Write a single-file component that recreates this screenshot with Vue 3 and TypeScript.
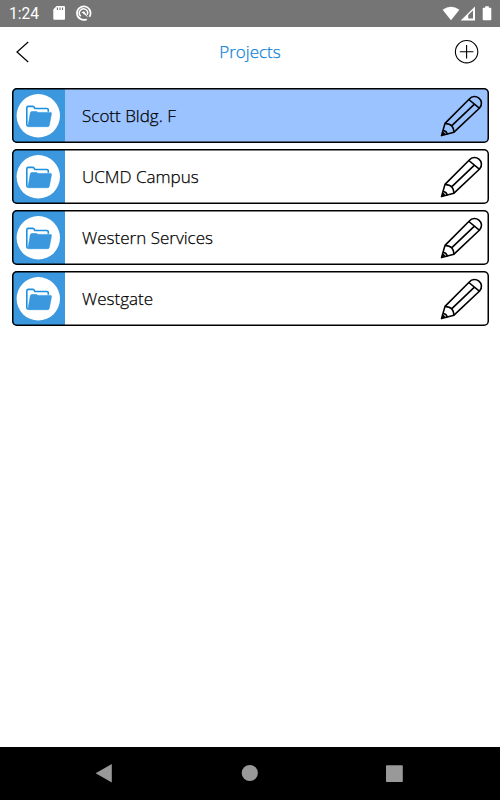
<script setup lang="ts">
import { ref } from 'vue'

const projects: string[] = ['Scott Bldg. F', 'UCMD Campus', 'Western Services', 'Westgate']
const selected = ref(0)
</script>

<template>
  <div class="screen">
    <div class="status">
      <span class="clock">1:24</span>
      <svg class="status-icons" width="44" height="18" viewBox="0 0 44 18">
        <path d="M6.6 2H14q1 0 1 1v11.8q0 1-1 1H4.3q-1 0-1-1V5.6z" fill="#fff" />
        <path d="M7.4 3.4v2.5M10 3.4v2.5M12.5 3.4v2.5" stroke="#757575" stroke-width="1.1" />
        <path d="M36.8 15.2A6.8 6.8 0 1 1 39.4 12.9" fill="none" stroke="#fff" stroke-width="1.7" />
        <path d="M30.8 12.1A4.1 4.1 0 1 1 37.2 10.7" fill="none" stroke="#fff" stroke-width="1.5" />
        <path d="M31.5 8.3l2.6-1 4.2 6.2z" fill="#fff" />
      </svg>
      <svg class="signal-icons" width="52" height="18" viewBox="0 0 52 18">
        <path d="M.6 4.8Q9 -1.4 17.4 4.8L9 15.3z" fill="#fff" />
        <path d="M18.7 15.4L33 1.5v13.9z" fill="#fff" />
        <path d="M26.2 13.5V10l4.8-4.6v8.1z" fill="#757575" />
        <path d="M43.2 1.2h3.6v1.6h1.7q.8 0 .8.8v10.9q0 .8-.8.8h-7q-.8 0-.8-.8V3.6q0-.8.8-.8h1.7z" fill="#fff" />
      </svg>
    </div>

    <header class="toolbar">
      <svg width="16" height="24" viewBox="0 0 16 24">
        <path d="M13.2 2L2 12l11.2 10" fill="none" stroke="#000" stroke-width="1.2" />
      </svg>
      <h1>Projects</h1>
      <svg class="add" width="26" height="26" viewBox="0 0 26 26" fill="none" stroke="#000" stroke-width="1.1">
        <circle cx="12.6" cy="12.7" r="11.2" />
        <path d="M5.8 12.7h13.6M12.6 5.9v13.6" />
      </svg>
    </header>

    <main class="list">
      <div
        v-for="(name, i) in projects"
        :key="name"
        class="row"
        :class="{ active: i === selected }"
        @click="selected = i"
      >
        <div class="tile">
          <svg width="44" height="44" viewBox="0 0 44 44">
            <circle cx="22.3" cy="21.8" r="21.7" fill="#fff" />
            <path
              d="M12.4 32.3q-1.6-.2-1.6-1.8V13.9q0-1.5 1.5-1.5h4.3q1 0 1.5.8l.5.8q.3.5 1 .5h11.2q1.5 0 1.5 1.5v1.8"
              fill="none"
              stroke="#1b8fe0"
              stroke-width="1.6"
            />
            <path
              d="M16.1 17.5h4.4q.6 0 1 .4l.5.5h12.5q1.2 0 1 1.2L33.3 31.2q-.3 1.5-1.7 1.5H12.8q-.8 0-.7-1l2.2-12.8q.3-1.4 1.8-1.4z"
              fill="#3b98de"
              stroke="#1b8fe0"
              stroke-width=".5"
            />
          </svg>
        </div>
        <span class="name">{{ name }}</span>
        <svg class="pencil" width="44" height="44" viewBox="0 0 44 44">
          <g fill="none" stroke="#000" stroke-width="1.6" stroke-linejoin="round">
            <path d="M1.5 41.6L5 29.4 29.3 5C35-1.8 45.8 6.6 39.6 14L14 38.2z" />
            <path d="M5 29.4q4.9.6 6.8 2.5 1.8 2 2.2 6.3M28.8 5.5l10.8 8.8M11.6 31.8l23.1-22" />
            <path d="M3.1 36.3q3.6.8 4.2 4" />
          </g>
          <path d="M1.5 41.6l1.4-4.1q2 .8 2.6 3.1z" fill="#000" />
        </svg>
      </div>
    </main>

    <nav class="navbar">
      <svg width="20" height="20" viewBox="0 0 20 20"><path d="M.6 10.2L16.8 1v18.4z" /></svg>
      <svg width="20" height="20" viewBox="0 0 20 20"><circle cx="9.8" cy="10" r="8.1" /></svg>
      <svg width="20" height="20" viewBox="0 0 20 20"><rect x="2" y="2.2" width="16.8" height="16.8" rx=".8" /></svg>
    </nav>
  </div>
</template>

<style>
body {
  background: #fff;
}
</style>

<style scoped>
.screen {
  display: flex;
  flex-direction: column;
  box-sizing: border-box;
  width: 500px;
  height: 800px;
  overflow: hidden;
  background: #fff;
  font-family: 'Open Sans', sans-serif;
}
.status {
  display: flex;
  align-items: center;
  flex: none;
  box-sizing: border-box;
  height: 26.5px;
  padding: 0 6px 0 9px;
  background: #757575;
  color: #fff;
}
.clock {
  width: 41px;
  padding-top: 2px;
  font: 400 15.6px/26px Roboto, sans-serif;
}
.signal-icons {
  margin: 1px 0 0 auto;
}
.toolbar {
  display: grid;
  grid-template-columns: 40px 1fr 40px;
  align-items: center;
  flex: none;
  box-sizing: border-box;
  height: 50px;
  padding: 0 20px 0 15px;
}
.toolbar h1 {
  margin: 0 0 0 5px;
  text-align: center;
  font-size: 17px;
  line-height: 24px;
  font-weight: 300;
  color: #0f83d6;
  -webkit-text-stroke: 0.25px currentColor;
}
.add {
  justify-self: end;
}
.list {
  display: flex;
  flex: 1;
  flex-direction: column;
  gap: 6px;
  padding: 11.5px 11.5px 0;
}
.row {
  position: relative;
  display: flex;
  align-items: center;
  box-sizing: border-box;
  height: 55px;
  padding-right: 5px;
  border-radius: 5px;
  background: #fff;
}
.row::after {
  content: '';
  position: absolute;
  inset: 0;
  border-radius: 5px;
  box-shadow: inset 0 0 0 1.5px #000;
}
.row.active {
  background: #9bc3ff;
}
.tile {
  display: flex;
  align-items: center;
  justify-content: center;
  align-self: stretch;
  width: 53.5px;
  border-radius: 5px 0 0 5px;
  background: #3b98de;
}
.name {
  flex: 1;
  padding: 1px 0 0 17px;
  font-size: 17.05px;
  line-height: 24px;
  font-weight: 300;
  color: #000;
  -webkit-text-stroke: 0.25px currentColor;
}
.navbar {
  display: flex;
  align-items: center;
  justify-content: space-between;
  flex: none;
  box-sizing: border-box;
  height: 53.5px;
  padding: 0 96px 0 95px;
  background: #000;
  fill: #999;
}
</style>
